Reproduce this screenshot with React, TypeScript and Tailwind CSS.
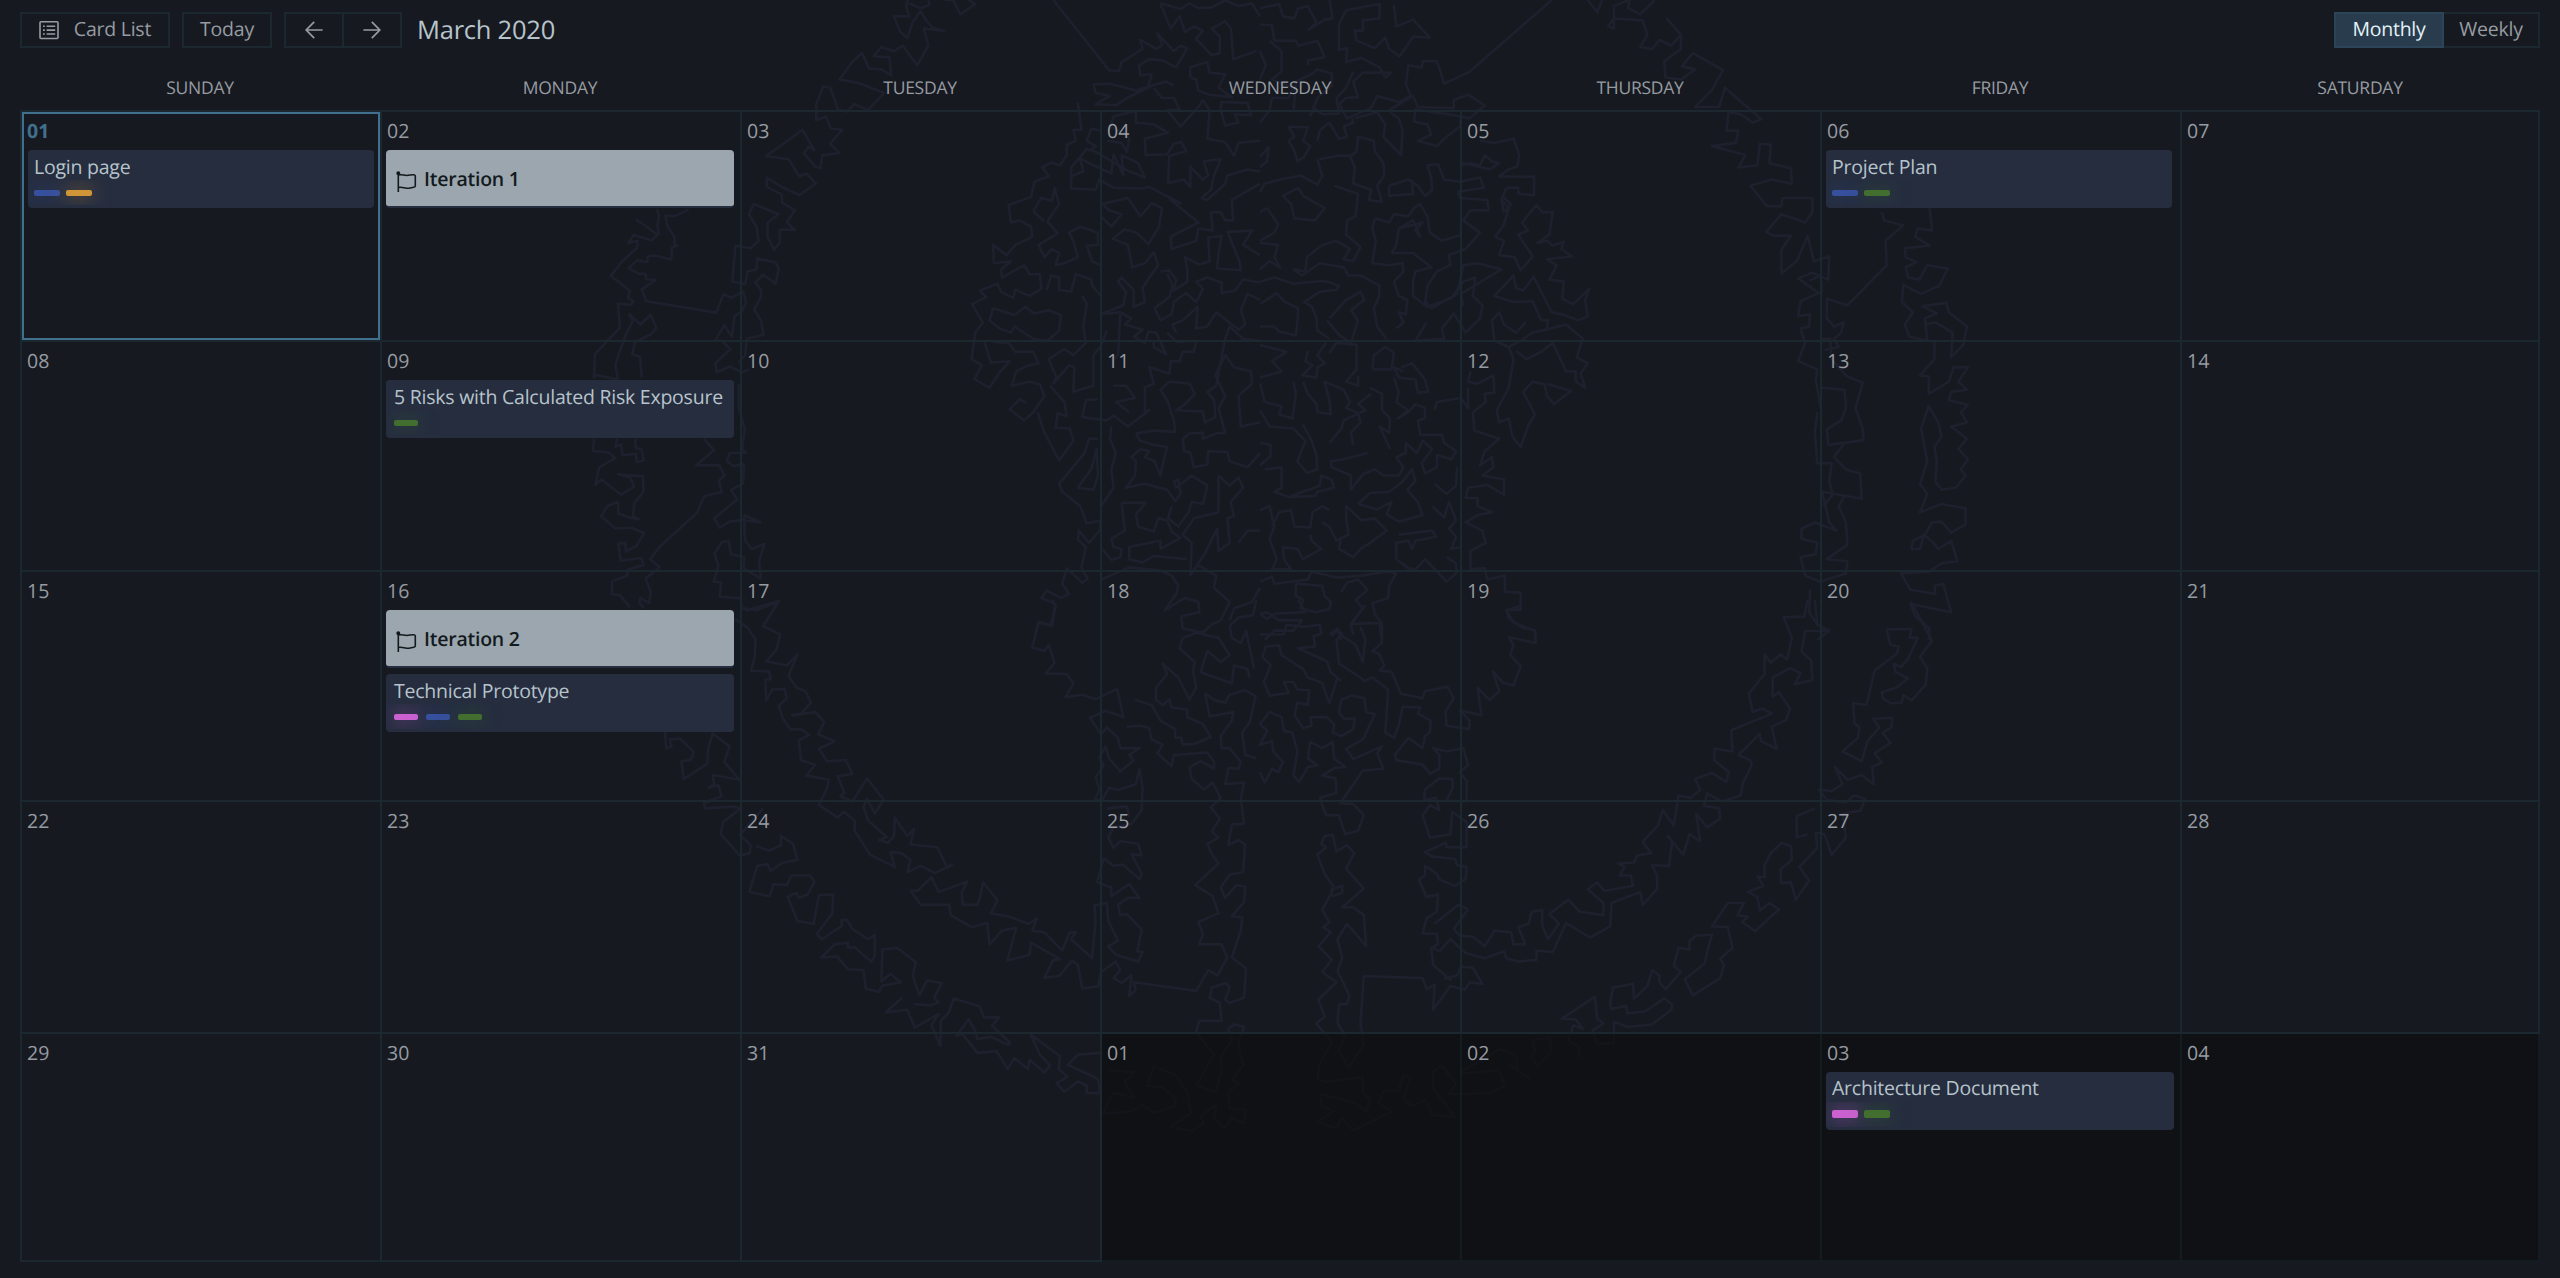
import React from "react";

type Label = "blue" | "orange" | "green" | "pink";
type Item =
  | { kind: "card"; title: string; labels: Label[]; bar: string; gap: string; frame?: string; line?: string }
  | { kind: "milestone"; title: string };
type Day = { n: string; today?: boolean; other?: boolean; items?: Item[] };

const labelClass: Record<Label, string> = {
  blue: "bg-[#36509d] shadow-[0_0_20px_#36509d90]",
  orange: "bg-[#d09536] shadow-[0_0_20px_#d09536b0]",
  green: "bg-[#426f2f] shadow-[0_0_20px_#426f2fa0]",
  pink: "bg-[#cb61d1] shadow-[0_0_20px_#cb61d1b0]",
};

const wide = "w-[26px] h-[6px]";
const narrow = "w-[24px] h-[6px]";

const weekdays = ["SUNDAY", "MONDAY", "TUESDAY", "WEDNESDAY", "THURSDAY", "FRIDAY", "SATURDAY"];

const special: Record<number, Partial<Day>> = {
  0: { today: true, items: [{ kind: "card", title: "Login page", labels: ["blue", "orange"], bar: wide, gap: "gap-[6px] pl-[6px]" }] },
  1: { items: [{ kind: "milestone", title: "Iteration 1" }] },
  5: { items: [{ kind: "card", title: "Project Plan", labels: ["blue", "green"], bar: wide, gap: "gap-[6px] pl-[6px]", frame: "mr-[2px]" }] },
  8: { items: [{ kind: "card", title: "5 Risks with Calculated Risk Exposure", labels: ["green"], bar: narrow, gap: "gap-[8px] pl-[8px]" }] },
  15: {
    items: [
      { kind: "milestone", title: "Iteration 2" },
      { kind: "card", title: "Technical Prototype", labels: ["pink", "blue", "green"], bar: narrow, gap: "gap-[8px] pl-[8px]" },
    ],
  },
  33: {
    items: [
      { kind: "card", title: "Architecture Document", labels: ["pink", "green"], bar: "w-[26px] h-[8px] -mt-[2px]", gap: "gap-[6px] pl-[6px]", line: "leading-[32px]" },
    ],
  },
};

const days: Day[] = Array.from({ length: 35 }, (_, i) => ({
  n: String(i < 31 ? i + 1 : i - 30).padStart(2, "0"),
  other: i >= 31,
  ...special[i],
}));

/* Faint line art of a tree inside a ring, split in four quadrants */
const topLeft = [
  "217,512 222,530 218,552 221,572 205,589 165,576 153,595 174,590 172,608 138,642 114,676 157,712 152,730 164,738 160,747 130,744 134,803 78,868 76,925 78,918 130,930 124,895 134,860 149,816 163,787 155,770 180,795 203,771 216,803 204,819 168,838 162,868 179,874 183,925",
  "170,538 194,555 218,575",
  "288,514 255,530 236,528 240,552 256,580 257,600 263,602 251,606 249,636 212,626 197,628 195,642 172,638 154,657 177,671 192,671 193,684 214,686 183,709 193,738 350,766 366,721 385,730 410,714 417,740 408,762 391,775 385,825 368,797 347,835 362,835 382,855 348,890 351,912 380,898 408,912 425,905",
  "76,1075 74,1105 108,1108 124,1122 88,1145 79,1188 93,1175 137,1212 166,1192 157,1170 130,1162 186,1167 187,1205 166,1233 164,1265 176,1272 152,1267 131,1258 130,1230 106,1240 92,1265 124,1295 160,1293 188,1306 172,1337 148,1351 146,1330 131,1332 136,1374 182,1367 187,1384 152,1395 150,1410 117,1424 116,1456 134,1458 157,1488",
  "128,1075 124,1095 137,1088 140,1115 170,1112 172,1132 187,1128 183,1102 170,1097 168,1075",
  "322,1075 345,1103 305,1140 357,1140 368,1165 356,1178 362,1206 323,1215 307,1256 224,1339 202,1370 223,1390 192,1417 203,1450 200,1478 180,1465 178,1478 188,1490",
  "400,940 400,1000 414,1050 408,1100 417,1110 380,1110 374,1130 388,1142 412,1137 410,1185 383,1200 397,1224 345,1270 358,1293 380,1278 411,1274 449,1280 413,1262 413,1295 415,1325 430,1345 458,1333 446,1374 450,1418 411,1392 413,1365 383,1358 378,1326 363,1328 346,1356 355,1386 344,1425 361,1427 358,1462 405,1466 407,1490 440,1495 490,1474 455,1535 495,1555",
  "780,0 775,15 782,40 748,40 762,78 778,93 790,55 807,27 820,50 835,68 860,76 815,70 825,112 800,160 768,112 748,125 719,115 703,138 738,140 742,185 720,170 692,168 677,130 657,148 626,195 668,203 726,228 690,270 660,255 642,273 622,268 614,240 605,215 590,212 574,255 574,295 595,285 607,315 632,318 605,352 626,375 588,380 583,412 572,408 546,375 557,360 570,368 543,318 497,355 462,382 512,390 536,432 552,425 573,450 536,478 500,460 463,435 463,458 497,477 498,497 526,515 508,545 526,563 492,563 492,595 480,612 465,580 465,545 490,525 434,500 423,525 440,555 445,590 427,608 393,602 386,690 415,695 420,665 440,660 442,633 482,643 490,658 483,695 455,673 437,692 450,710 450,728 435,758 450,785 456,820 418,830 415,870 400,888",
  "825,0 828,12 807,20 782,8",
  "862,0 880,0 897,35 930,10 915,0",
  "1105,0 1230,172 1252,174 1258,152 1305,120 1300,98 1336,120 1350,110 1338,82 1375,125 1390,112 1405,118 1380,165 1350,148 1320,145 1297,160 1300,185 1325,182 1318,212 1290,222 1232,205 1195,207 1200,228 1232,235 1200,255 1245,258 1270,240 1330,208 1358,200 1375,210",
  "1345,10 1368,70 1388,40 1400,78 1420,65 1440,75 1425,95 1460,135 1478,130 1478,90 1460,70 1490,52 1503,70 1508,145 1560,125",
  "1345,8 1390,22 1410,8 1430,20 1460,18 1490,0 1520,15 1550,8 1568,40",
  "1160,250 1168,318 1150,318 1155,345 1135,355 1135,380 1120,405 1100,398 1080,410 1095,432 1063,445 1055,483 1005,502 1010,545 1030,540 1055,555 1058,580 1020,600 1000,625 970,600 972,645 1010,640 988,660 990,680 1040,650 1052,672 1075,672 1078,708 1052,725 1020,710 1015,730 988,715 980,695 940,712 955,728 923,745 947,790 930,815 922,880 945,895 928,928 962,950 985,912 1008,885 965,888 950,835",
  "1060,518 1078,485 1102,492 1108,460 1118,500 1105,520 1092,543 1115,572 1072,600 1085,630 1102,610 1118,620 1110,650 1130,645 1160,630 1150,590 1140,570 1165,555 1205,570 1205,600 1180,602 1192,640 1215,652",
  "1060,518 1085,542",
  "970,755 1018,772 1042,752 1062,768 1095,760 1122,772 1118,810 1092,835 1060,830 1018,800 1010,815 985,805 962,785 970,755",
  "1090,710 1100,675 1118,680 1118,710 1145,715 1155,672 1190,685 1192,700 1212,725",
  "970,838 1005,840 1020,862 1060,862 1072,890 1045,897 1022,910 1012,945 1052,935 1075,942 1085,970 1060,1010 1040,1030 1007,1003 1030,978 1045,988",
  "1170,725 1180,745 1172,800 1178,840 1150,870 1130,855 1095,880 1112,925 1105,940 1140,895 1152,900 1150,960 1195,945 1195,870 1210,850 1225,810",
  "1070,1010 1085,1060 1118,1128 1150,1080 1142,1050 1110,1048 1115,1012 1135,1020 1130,985 1098,945",
  "1205,1075 1185,1075 1175,1110 1118,1185 1125,1205 1165,1240 1180,1282 1210,1275 1210,1298 1185,1330 1162,1300 1160,1322 1178,1340 1168,1390 1182,1418 1170,1428 1135,1392 1125,1430 1140,1455 1122,1465 1090,1447 1078,1465 1110,1480 1100,1532 1072,1523 1062,1568",
  "1160,1195 1190,1150 1202,1100 1205,1165 1195,1200 1160,1195",
  "1235,1045 1232,1075 1245,1110 1235,1150 1240,1195 1212,1240",
  "1145,432 1172,420 1165,388 1195,405 1235,425 1240,378 1262,430 1258,380 1295,400 1310,435 1272,418 1200,372 1180,365 1145,410 1145,462 1200,465 1208,440 1240,460 1305,462 1320,458 1390,498 1368,490 1430,545 1368,580 1370,610 1425,590 1430,560 1462,565 1458,520 1480,520 1490,540 1508,540 1505,490 1568,450",
  "1210,320 1190,315 1180,345 1200,358 1185,370",
  "1225,345 1258,350 1270,372 1275,340 1262,322 1232,312 1240,285 1290,272 1290,300 1330,305 1362,325 1310,340 1312,380 1360,378 1375,352 1392,348 1403,370 1365,382 1362,448 1398,440 1412,458 1412,408 1440,440 1452,430 1442,395 1480,390 1465,430 1458,465 1437,485 1450,490 1490,450 1495,430 1540,415 1568,420",
  "1330,215 1348,240 1375,240 1388,268 1360,270 1390,310 1430,262 1440,245 1455,270 1450,340 1490,348 1510,382 1520,350 1568,345",
  "1480,268 1490,308 1520,300 1512,280 1548,282 1540,252 1482,250 1480,268",
  "1412,190 1412,165 1450,152 1455,178 1490,182 1475,215 1505,238 1455,232 1430,222 1425,195 1412,190",
  "1215,500 1272,485 1300,530 1325,498 1348,510 1342,555 1318,598 1292,570 1265,562 1238,585 1272,600 1282,655 1310,645 1330,618 1340,650 1320,680 1305,705 1310,740 1285,752 1285,710 1258,680 1250,690 1268,715 1262,748 1215,768",
  "1215,500 1230,515 1258,525 1235,555 1212,530",
  "1345,665 1365,662 1380,685 1375,712 1405,690 1405,660 1400,630 1432,648 1455,640 1452,582 1482,578 1475,620 1472,658 1525,662 1522,640 1495,568 1550,565 1530,600 1568,625",
  "1360,670 1372,700 1365,728 1332,755 1345,785 1370,770 1375,740 1402,718 1425,740 1440,708 1425,690 1450,680 1482,692 1482,718 1512,712 1530,685 1568,692",
  "1212,770 1255,765 1280,780 1265,795 1305,808 1285,825 1310,840 1318,812 1335,815 1358,868 1330,850 1330,835",
  "1255,770 1250,870 1240,880",
  "1360,815 1382,838 1425,835 1420,862 1395,862 1388,885 1368,885 1365,915 1320,900 1330,940 1310,950 1310,1010 1320,1005 1272,1045 1240,1018 1225,1030 1170,1022 1178,980 1205,978",
  "1380,815 1372,795 1395,785 1428,752 1425,805 1450,800 1470,765 1520,808 1535,795 1525,760 1540,720 1568,735",
  "1240,945 1268,945 1288,975 1245,985 1275,1010",
  "1290,1062 1330,1055 1378,1058 1375,1030 1362,985 1345,955 1365,935 1410,940 1422,965 1400,990 1380,1005 1440,1008 1445,1035 1468,1022 1465,980 1450,960 1470,945 1490,830 1500,800 1530,830 1568,835",
  "1290,1062 1300,1080 1330,1090 1360,1095 1355,1115 1345,1165 1332,1130 1310,1120 1320,1105 1300,1100 1280,1120 1290,1130 1288,1165 1268,1195 1310,1185 1360,1200 1378,1228 1390,1210 1385,1175 1375,1180 1380,1195 1415,1165 1450,1190 1440,1235 1415,1230 1408,1255 1385,1290 1362,1270 1370,1240",
  "1395,1075 1410,1062 1440,1060 1440,1075 1470,1062 1490,1060 1475,1000 1490,970 1468,920 1490,870 1510,900 1548,910 1550,940 1520,970 1525,1045 1568,1035",
  "1395,1075 1398,1105 1412,1110 1420,1145 1450,1138 1452,1105 1495,1108 1500,1130 1540,1145 1568,1110",
  "1475,1165 1475,1255 1420,1270 1395,1310 1415,1330 1412,1410 1445,1355 1472,1295 1475,1350 1500,1330 1495,1270 1510,1265 1502,1230 1530,1195 1520,1170 1500,1190 1475,1165",
  "1258,1232 1312,1232 1290,1260 1295,1290 1330,1302 1340,1270 1360,1275 1372,1305 1390,1318 1345,1345 1345,1325 1275,1340 1275,1370 1305,1378 1330,1362 1405,1370",
  "1258,1232 1265,1300 1235,1320 1240,1340 1258,1345 1255,1365 1235,1372 1215,1345",
  "1212,1420 1275,1390 1345,1398 1370,1410 1385,1435 1380,1455 1355,1495 1400,1465 1430,1475 1432,1500 1392,1510 1395,1540 1440,1550 1460,1530 1480,1520 1500,1475 1465,1440 1470,1410 1430,1385",
  "1520,1330 1540,1300 1568,1300",
  "1500,1520 1510,1490 1550,1475 1568,1440",
];

const topRight = [
  "610,0 438,176 385,205 370,150 340,150 338,165 310,160 305,205 315,235 290,250 245,235 232,265 182,290 165,255 180,240 205,238 195,200 215,178 275,178 262,190 250,165 212,142 180,152 182,118 165,122 165,60 180,25 250,10 250,45 215,50 215,75 198,75 202,100 240,118 262,92 270,120 292,138 320,90 355,92 320,48 285,65 280,12",
  "0,20 40,10 48,40 72,45 80,20 100,15 118,55 100,75",
  "105,70 135,48 152,45 145,0",
  "0,60 25,62 30,100 75,100 80,112 120,100 135,140 100,148 100,160",
  "0,125 12,160 0,195",
  "20,100 45,125 45,175 25,195 70,215 60,240 25,240 20,270 0,300",
  "70,275 75,200 110,180 120,170 150,180 150,210 120,240 105,285",
  "110,262 130,280 165,278 160,240 180,215 195,175",
  "270,270 320,235 330,262 405,265 405,245 435,232 470,258 438,290 405,282 325,268 322,298 350,305 358,330 330,345 370,358 385,340 418,310 420,285",
  "198,290 245,275 262,305 258,335 295,380 298,320 290,290 272,275",
  "195,305 192,290",
  "145,300 165,340 182,335 175,310 195,300",
  "120,345 125,320 145,300",
  "60,310 100,312 90,345 105,358 92,385 78,395 72,370 60,345 72,335 60,310",
  "0,385 18,360 15,395 0,410",
  "125,390 160,382 188,382 198,410 195,450 232,465 228,490 255,495 245,455 260,430 258,400 240,370 238,345 205,335 202,370 190,382",
  "120,390 130,432 120,452 85,430 42,440 10,450 0,470",
  "80,460 90,480 135,510 115,540 72,535 65,500 48,480 80,460",
  "0,520 15,510 38,550 30,570 0,590",
  "155,455 205,475 200,530 182,540 180,575 210,605 195,640 175,635 188,610 160,590 130,600 98,630 95,665 70,660 88,675 125,645 175,655 185,675 210,675 250,700 248,730 238,755 245,800 265,832",
  "0,595 38,600 30,630 42,655 20,640 0,660",
  "0,690 30,680 70,695 135,688 165,700 160,710 125,715 92,740 108,750 118,780 120,810 145,830",
  "0,745 35,718 52,740 80,755 78,790 75,822 40,812 30,800 0,800",
  "145,780 180,735 210,715 218,735 190,760 205,785 190,840 165,820 140,785",
  "240,535 270,545 280,525 310,530 322,510 335,500 350,530 355,570 380,590 420,575 420,550",
  "240,535 235,560 242,590 235,645 270,650 298,645 300,665 280,690 290,725 308,735 305,770 290,765 300,790 285,805",
  "275,620 285,600 290,560 320,540 335,580 325,565 340,545 290,560",
  "275,620 320,620 358,655 325,665 320,690 320,725 350,752 400,730 425,690 450,680 445,725 465,748 460,780 430,815 405,768 380,805 385,830 325,835 348,790",
  "270,455 310,440 330,455 345,480 360,465 358,435 350,405 372,402 385,440 420,445 460,435 468,460 415,470 418,485 475,490 478,515 440,515 425,540 460,570 430,610 395,625 398,650 370,665 350,700 345,745",
  "270,455 270,480 320,475 318,440",
  "420,405 440,400 460,405 470,380 485,395 500,400 480,415 420,398",
  "460,345 490,350 530,340 542,380 538,408 520,415 500,432 573,433 573,478 540,475 540,460 515,460 505,490 510,520 525,500 505,480",
  "505,490 520,510 510,550 492,580 510,590 500,625 532,630 545,662 570,628 540,575 560,565 548,545 578,502 590,520 612,520 605,575 580,595 600,590 612,602 635,592 630,610 652,628 600,635 620,650 605,685 635,690 632,732 655,745 688,708 680,735 685,775 665,785 632,770 610,765 572,678 550,712 535,705 530,675 490,725 530,740 570,738 588,785 602,785 600,810",
  "425,750 420,720 505,660 455,645 425,650 412,720 360,755 345,740",
  "555,790 535,815 510,795 500,765 485,785 490,835 520,850 545,835 570,815 640,795 675,830 662,875 685,890 670,915 680,950 660,935 660,910 640,910 612,840 590,860 558,880 535,860",
  "440,910 435,935 455,940 488,920 490,962 470,965 472,985 445,1010 448,1055 500,1075 470,1105 460,1140 485,1120 488,1145 465,1165 510,1175 510,1212 475,1188 435,1195 430,1220 455,1220 455,1240 485,1255 455,1262 430,1280 465,1300 472,1330 440,1350 440,1395 470,1392 475,1420 512,1410 512,1450 545,1452 545,1485 515,1495 530,1525 575,1545 575,1568",
  "520,850 530,880 520,950 495,1005 500,1035 520,1025 528,1070 545,1095 562,1040 575,1015 550,960 570,935 595,942 600,970 615,990 650,958 600,940",
  "365,1005 370,985 420,975 435,1000 435,950",
  "0,845 55,862 25,885 45,910 0,925",
  "100,860 95,885 110,895 88,920 118,925 120,900 135,890 120,870 138,840",
  "145,865 160,840 202,845 202,905 180,935 205,945 205,920",
  "235,905 238,870 262,850 280,865 275,905 235,905",
  "70,935 75,965 68,1025 40,1015 45,995 10,985 0,940",
  "90,935 100,965 118,990 120,1010 148,1015 145,980 135,935 175,955 188,985 180,1000 205,1012 210,1035 190,1060 195,1090",
  "295,900 318,890 345,930 352,960 330,962 325,930 290,925 280,900 300,910",
  "280,925 290,960 285,985 310,1005 288,1025 310,1010 325,990 345,1000 345,1025 330,1030 335,1065 380,1065 385,1085 410,1105 400,1125 370,1115 370,1145 345,1160 338,1135 360,1100 340,1080 328,1110 305,1085 305,1110 285,1120 300,1145 290,1165 258,1165 240,1150 215,1162 190,1200 190,1165 150,1145 148,1130 175,1125 225,1110",
  "230,950 255,965 255,1005 272,1025 270,1060 250,1045 272,1100",
  "145,1085 170,1050 175,1030 220,1005 205,990 232,965",
  "90,1040 108,1080 118,1115 120,1150 98,1158 78,1130 95,1080 70,1050 20,1045 0,1005",
  "0,1085 22,1090 22,1118 0,1140",
  "10,1150 45,1145 45,1195 30,1205 60,1218 115,1215 120,1205 155,1195 150,1175 128,1165 125,1190 65,1215",
  "205,1235 230,1208 270,1205 298,1180 318,1150 325,1178 308,1200 330,1230 340,1262 290,1278 265,1260 275,1230 245,1248 205,1235",
  "0,1250 20,1240 30,1290 20,1320 35,1370 25,1395 65,1395 50,1370 48,1340 78,1345 90,1370 128,1345 108,1325 105,1310",
  "25,1290 40,1255 65,1250 72,1290 105,1292 110,1255 130,1240 145,1250",
  "130,1280 145,1290 160,1325 185,1310 180,1270 180,1240 212,1275 240,1270 265,1300 230,1330 210,1345 195,1365 165,1345 170,1315",
  "290,1310 360,1300 368,1315 325,1325 318,1345 310,1325 285,1330 285,1370 310,1392 325,1395 345,1370 390,1425 410,1405 410,1380 390,1365",
  "365,1185 390,1210 410,1190 412,1145",
  "360,1240 385,1268 395,1230 410,1275 395,1295 410,1315 400,1345 420,1340",
  "0,1425 25,1412 30,1430 100,1420 108,1400 160,1415 215,1410 265,1400 285,1405 270,1435 268,1465 235,1478 240,1505 255,1528 255,1568",
  "75,1430 75,1460 90,1470 85,1490 115,1500 145,1492 148,1475 135,1460 130,1435 75,1430",
  "170,1450 182,1428 205,1420 225,1445 200,1470 215,1490 190,1530 195,1555",
  "0,1505 15,1500 40,1520 88,1520 70,1545 30,1545 10,1568",
  "145,1555 162,1540 170,1568",
  "685,0 705,30 715,0",
  "825,0 795,35 770,20 772,0 740,15 740,70 728,65 740,45 800,50 810,85 795,115 820,120 835,98 860,112 880,85 880,120 845,150 848,190 880,195 910,170 882,162 905,130 968,172 945,220 910,262 960,262 972,215 1048,292 1030,300 1005,280 980,275 975,320 1000,320 995,350 945,358 1015,380 1000,410 1040,405 1045,352 1068,355 1065,400 1110,412 1112,450 1070,440 1025,455 1060,505 1090,505 1092,485 1155,485 1155,520 1140,545 1090,525 1058,568 1075,578 1110,578 1090,612 1090,670 1122,640 1145,578 1158,640 1190,628 1188,685 1155,668 1125,682 1168,718 1130,738 1125,775 1150,770 1148,800 1130,805 1140,840 1125,885 1165,905 1162,930 1172,1000",
  "850,45 880,85",
  "1148,688 1172,675 1175,715",
  "1300,520 1305,540 1345,552 1308,590 1310,650 1228,748 1185,732 1185,780 1200,800 1220,790 1215,815 1200,830 1210,850 1180,858",
  "1172,830 1192,830 1195,880 1225,920 1260,938 1245,1000 1260,1050 1262,1078 1222,1085 1200,1120 1225,1150 1255,1160 1258,1222 1175,1205 1190,1280 1205,1300 1160,1280 1132,1295 1132,1320 1165,1330 1162,1358 1130,1365 1140,1410 1170,1425 1225,1405 1228,1375 1185,1370 1228,1335 1225,1280 1210,1240 1222,1215",
  "1172,950 1222,955 1225,1000 1215,1030 1185,1052 1188,1090 1220,1085",
  "1165,1010 1160,1060 1165,1135 1195,1135 1190,1180 1198,1210 1178,1240",
  "1400,510 1405,565 1375,560 1370,580 1400,602 1348,608 1350,630 1372,642 1350,655 1355,680 1378,685 1395,650 1438,658 1420,700 1382,720 1345,698 1342,740 1365,765 1348,795 1358,825 1395,835 1390,780 1415,768 1385,750 1435,742 1440,765 1478,800 1470,845 1445,875 1448,815 1412,790 1390,795",
  "1410,835 1410,880 1380,920 1398,922 1398,965 1440,935 1450,900 1480,900 1460,935 1478,955 1445,960 1440,980 1480,992 1465,1010 1478,1035 1445,1045 1478,1075 1460,1100 1480,1125 1465,1150 1475,1165 1455,1195 1425,1200 1412,1180 1415,1130 1410,1095 1425,1070 1418,1035 1398,995 1382,1050 1395,1130 1380,1185 1395,1210 1380,1255 1425,1235 1475,1245 1475,1285 1445,1305 1425,1278 1405,1280 1390,1310 1365,1325 1362,1345 1380,1345 1388,1310 1408,1330 1418,1345 1445,1325 1458,1375 1425,1380 1400,1400 1340,1405 1360,1445 1412,1455 1410,1435 1428,1430 1445,1500 1360,1480 1370,1510 1400,1540 1398,1568",
  "1150,1445 1148,1500 1165,1530 1190,1545 1165,1568",
];

const bottomLeft = [
  "392,55 420,80 438,115 436,165 428,205 468,208 472,230 460,232 462,292 475,260 503,258 508,285 490,308 500,345 515,375 540,375 558,392 535,408 540,465 572,478 552,510 602,522 598,548 580,595 622,632 635,615 660,640 660,670 695,740 750,775 740,732 765,735 785,755 778,790 808,772 840,793 878,768 868,778 845,718 785,710 793,665 778,685 750,632 748,685 735,705 715,697 732,688 712,665 690,640 680,600 688,578 705,620 725,580 688,518 655,585 628,570 637,560 622,512 655,505 640,465 598,468 580,432 615,410 578,390 592,355 572,325 520,335 540,330 562,298 550,265 530,255 512,220 532,158 508,190 462,178 485,145 493,100 455,75 490,3 415,32",
  "235,383 238,430 250,425 245,405 268,402 300,442 292,465 272,468 277,520 330,475 332,430 342,388 380,425 368,470 402,522 342,508 345,535 333,545 355,538 362,570 322,590 325,605 385,600 405,605 365,645 360,680 403,742 425,735 427,712 403,682 455,605",
  "440,715 468,728 495,712 495,685 522,708 532,755 498,763 472,787 465,767 442,772 424,848 470,860 478,825 508,828 518,800 560,800 570,818 555,855 535,865 530,850 510,862 532,932 568,940 580,857 612,855 610,910 575,970 587,985 632,945 630,930 642,928 655,955 690,985 705,972 705,1035 697,1050 660,1008 645,1010 645,995 615,1000 585,1038 620,1035 645,1072 680,1075 685,1128 715,1138 722,1120 763,1110 740,1085 720,1108 722,1015 755,1010 797,1052 790,1090 805,1148 822,1105 855,1112 838,1155 848,1168 830,1177 792,1173",
  "766,1155 730,1197 778,1190 795,1242 848,1202 832,1235 852,1295 853,1222 870,1200 882,1157 940,1180 950,1212 983,1212 968,1237 1008,1285 1005,1292 965,1268 935,1275 930,1250 915,1218 888,1265 902,1260 935,1315 978,1310 1003,1362 1018,1330 1048,1362 1052,1335 1085,1372 1098,1352 1075,1320 1055,1262 1120,1325 1117,1362 1137,1385 1112,1403 1130,1428 1160,1398 1180,1410 1180,1432 1210,1432 1205,1390 1137,1350 1160,1320 1212,1315",
  "785,843 808,885 872,885 875,915 922,950 957,938 962,1000 990,960 1022,952 1002,1047 1052,1030 1055,995 1120,1043 1105,1045 1085,1097 1118,1092 1147,1047 1160,1060 1170,1128 1205,1122 1212,1080 1245,1050 1255,1075 1240,1097 1258,1112 1280,1090 1275,1150 1290,1132 1285,1110 1425,1135 1452,1075 1473,1090 1495,1038 1482,1000 1432,1000 1440,970 1430,935 1475,910 1462,860 1423,828 1475,765 1460,738 1450,708 1475,690 1460,672 1478,635 1458,602 1480,575 1462,530 1442,550 1415,520 1410,485 1435,468 1465,490",
  "785,843 800,845 832,805 848,848 912,818 900,850 902,885 935,885 940,865 948,820 980,872 965,910 1008,920 1050,940 1068,925 1058,960 1085,965 1125,1018 1142,965 1155,965 1145,985 1192,1040 1200,930 1197,887 1225,880 1228,930 1250,990 1228,1005 1245,1030 1295,1050 1305,1022 1293,1020 1303,957 1270,912 1255,915 1250,885 1272,865 1298,865 1275,825 1235,860 1235,835 1203,820 1218,750 1240,772 1260,768 1298,810 1303,795 1280,738 1303,742 1295,708 1255,700 1240,720 1228,690 1240,660 1280,650 1303,610 1305,545 1298,492 1290,535 1250,552 1230,545 1215,580 1198,580 1208,550 1200,515 1218,480 1208,458 1222,425 1230,460 1255,498 1285,465 1275,450 1298,430 1255,430 1250,400 1225,370 1212,390 1187,342 1222,322 1262,340 1248,258 1200,288 1170,275 1132,282 1150,242 1135,215 1088,213 1108,183 1095,130 1085,148 1058,138 1072,65 1102,75 1110,18 1103,0",
  "1270,368 1300,365 1320,372 1325,405 1350,420 1338,445 1370,482 1375,450 1450,443 1465,470 1465,490",
  "1288,290 1325,305 1345,350 1378,375 1378,400 1392,400 1395,420 1420,418 1458,398 1440,360 1405,340 1405,318 1370,312 1365,290 1350,305 1335,290 1335,255 1360,215 1350,185 1385,225 1410,290 1425,255 1418,205 1422,180 1388,140 1395,110 1425,95 1475,110 1500,160 1480,180 1450,148 1435,210 1505,242 1510,190 1540,200 1545,225",
  "1445,270 1455,338 1508,325 1505,350 1480,395 1482,430 1500,430 1525,470 1520,490 1498,487 1490,535 1532,530 1525,575 1532,650 1505,652 1497,712 1520,697 1535,710 1530,790 1500,798 1480,835 1490,865 1515,828 1535,832 1532,878 1505,918 1528,922 1525,960 1505,1038 1537,1070 1532,1155 1500,1170 1490,1160 1500,1125 1492,1112 1460,1125 1455,1155 1478,1170 1482,1222 1432,1222 1425,1255 1465,1320 1425,1410 1468,1428 1482,1370 1480,1325 1505,1280 1497,1245 1510,1232 1532,1240 1520,1290 1530,1350 1505,1395 1522,1400 1497,1430 1500,1475 1535,1480 1532,1520 1505,1505 1487,1535 1465,1500 1470,1465 1435,1500 1442,1520 1415,1542 1368,1530 1413,1490 1405,1430 1380,1380 1330,1355 1315,1410 1350,1415 1380,1450 1375,1470 1330,1490 1305,1465 1280,1485 1215,1492 1240,1430 1285,1445 1265,1400 1285,1372 1228,1365",
  "1445,270 1465,290 1490,298 1500,275 1535,262 1558,280 1545,355 1528,385 1535,450 1560,460",
  "1500,75 1520,50 1552,45 1560,0",
  "1500,75 1505,110 1525,125 1537,90 1555,200",
  "1225,605 1270,600 1275,630",
];

const bottomRight = [
  "545,0 545,28 515,30 520,52 548,80 575,88 577,125 520,108 530,130 523,160 545,192 530,248 508,240 487,208 500,265 480,290 455,255 463,335 418,320 438,350 437,375 390,365 388,325 405,285 392,252 345,265 340,285 295,272 275,208 250,205 260,190 250,158 235,148 255,125 250,68 220,68 190,70 220,15",
  "0,40 15,55 30,40 95,35 80,0",
  "0,100 50,100 55,72 90,78 125,72 128,98 112,105 115,135 80,140 140,178 148,210 170,235",
  "5,165 12,135 40,132 45,160 90,200 100,225 130,240 145,300 162,225",
  "5,165 22,190 8,238 20,278 60,270 50,238 70,238 78,260 103,262 100,305 78,298 72,335 90,372 108,365 105,340 140,340 155,362 152,385 170,395 195,375 198,345 175,345 165,325 170,290 192,277 218,285 222,325 240,332 215,405 180,432 195,462 255,425 245,445 258,490 215,495 168,590 195,592 217,625 205,670 178,680 165,625 138,625 125,575 160,560 158,518 130,510 155,488 178,485 155,460 152,412 130,430 105,412 100,460 120,480 100,485 82,528 70,510 78,440 68,385 50,380 45,340 20,325 0,360 15,380 0,420 25,410 28,440 48,470 38,500 25,490 10,530 0,500",
  "150,105 162,85 172,100 160,115 165,185 210,225 218,235 235,225 268,260 262,385 280,400 290,365 298,310 335,312 330,330 357,350 355,385 345,395 340,430 310,400 282,450 285,465 340,478 355,505 375,490 375,450 362,430 390,440 425,430 435,480 418,500 432,525 432,585 390,582 403,545 402,520 375,518 345,550 343,580 368,575 375,610 355,595 340,625 355,690 398,680 402,615 432,645 432,718 390,718 388,705 345,732 360,745 408,752 412,770 432,775 430,810 408,830 375,812 370,795 345,772 345,800 332,812 348,862 372,855 370,905 348,925 340,968 370,970 372,1000 358,1010 362,1060 400,1105",
  "172,105 200,130 215,180 220,115 210,78",
  "135,685 152,682 160,730 182,712 197,735 180,780 217,838 172,892 195,892 217,915 222,1005 182,940 162,985 172,1040 162,1078 172,1105 187,1150 182,1172 165,1175 162,1228 178,1265 165,1310 185,1358 217,1290 210,1230 217,1092 340,1098 348,1130 365,1118 362,1190 398,1120 428,1132 438,1110 465,1115 445,1068 420,1065 412,1090 385,1100",
  "135,685 128,708 138,718 120,740 135,795 155,835 130,900 145,935 132,950 148,965 122,1005 150,1045 130,1080 160,1110 122,1160 135,1210 118,1230 150,1285 125,1345 120,1390 140,1400 215,1385 215,1430 230,1450 222,1485 200,1460 125,1435 130,1470 155,1485 120,1515 160,1535 170,1505 195,1540 275,1485 248,1460 258,1425 290,1425 300,1380 315,1385 300,1450 320,1470 345,1450 362,1497 408,1500 362,1420 362,1370 380,1352 410,1405 395,1435 480,1432 512,1412 500,1365 420,1375",
  "150,860 150,840 172,830 172,850 150,860",
  "375,1020 398,985 430,1025 470,1040 510,1020 515,1040 540,1050 578,1045 578,1018 612,1022 640,938 690,980 732,948 735,880 795,848 800,885 830,840 830,800 820,770 855,772 862,700 852,685 885,740 898,680 920,700 912,622 935,660 962,635 960,605 928,598 935,562 965,585 1005,568 1010,530 1028,480 1025,465 1000,450 1045,388 1048,410 1080,432 1070,368 1100,348 1108,315 1085,268 1072,280 1072,225 1108,198 1130,212 1118,245 1155,232 1152,175 1132,150 1140,90 1185,90 1165,70 1160,0",
  "375,1020 362,1010",
  "420,975 445,978 470,1005 490,960 525,965 530,1000 555,1000 540,950 562,940 568,905 590,900 590,945 602,985 625,940 605,912 645,870 668,905 718,915 718,880 685,840 705,820 720,845 780,830 775,800 752,800 762,775 748,765 782,762 788,742 818,735 800,702 832,655 842,610 865,655 875,568 900,575 920,552 910,520 945,502 975,528 980,500 950,465 950,432 988,440 985,378 1070,330 1050,315 1030,325 1022,272 1055,215 1055,158 1068,182 1088,158 1102,172 1112,110 1095,50 1138,48 1145,0",
  "435,898 405,955 418,975",
  "365,940 415,885 435,898",
  "1310,85 1362,85 1358,110 1375,110 1355,170 1340,195 1325,185 1328,208 1355,228 1330,255 1300,268 1302,285 1318,300 1342,298 1345,275 1362,292 1392,245 1395,198 1380,165 1405,118 1370,28 1360,5",
  "1310,85 1318,130 1335,135 1332,155 1285,205 1268,305 1240,300 1243,358 1253,370 1250,400 1218,440 1258,468 1270,410 1295,370 1282,345 1322,342 1320,370 1302,385 1318,415 1285,445 1300,472 1280,485 1283,535 1258,508 1228,522 1202,485 1218,535 1195,555 1168,550 1185,580 1225,588 1242,568 1265,578 1255,612 1218,620 1225,690 1195,740 1180,680 1162,675 1165,720 1128,775 1148,815 1120,870 1110,820 1090,822 1088,782 1112,755 1110,715 1090,705 1068,735 1055,770 1055,805 1040,802 1052,830 1020,848 1040,862 1045,902 1065,880 1085,898 1035,962 1008,935 1020,920 998,915 1012,880 978,880 945,948 978,950 988,1010 962,1042 970,1060 962,1098 905,1148 888,1102 930,1055 935,1020 945,972 912,975 898,990 898,1015 875,1010 865,1062 880,1080 848,1130 835,1110 835,1090 820,1075 810,1120 782,1158 780,1115 738,1125 732,1170 735,1188 765,1178 768,1200 805,1195 845,1157 862,1175 860,1190 820,1232 770,1240 740,1225 740,1288 705,1288 695,1250 718,1230 705,1215 700,1152 632,1215 660,1218 675,1245 655,1235 645,1280 670,1298 665,1330",
  "1160,605 1122,628 1122,690 1145,680",
  "570,1280 605,1268 610,1310 580,1355 568,1325 575,1310 570,1280",
  "420,1370 470,1330 500,1305 535,1320 538,1360 520,1350 565,1390",
];

function Artwork() {
  const quads: [string, string[]][] = [
    ["translate(560 0) scale(0.44643 0.40816)", topLeft],
    ["translate(1260 0) scale(0.47832 0.40816)", topRight],
    ["translate(560 600) scale(0.44643 0.34439)", bottomLeft],
    ["translate(1260 600) scale(0.47832 0.34439)", bottomRight],
  ];
  return (
    <svg className="absolute left-0 top-0 h-[1278px] w-[2560px]" viewBox="0 0 2560 1278" fill="none" stroke="#1e212d" strokeWidth="2.6" strokeLinejoin="round">
      {quads.map(([transform, lines]) => (
        <g key={transform} transform={transform}>
          {lines.map((points, i) => (
            <polyline key={i} points={points} vectorEffect="non-scaling-stroke" />
          ))}
        </g>
      ))}
    </svg>
  );
}

function ListIcon() {
  return (
    <svg className="h-[20px] w-[20px]" viewBox="0 0 20 20" fill="none" stroke="currentColor" strokeWidth="1.6">
      <rect x="1" y="1.7" width="18" height="16.8" rx="1" />
      <path d="M7.6 6.2h8.6M7.6 10.1h8.6M7.6 14h8.6" />
      <path d="M4 6.2h1.8M4 10.1h1.8M4 14h1.8" />
    </svg>
  );
}

function Arrow({ flip }: { flip?: boolean }) {
  return (
    <svg className={flip ? "h-[18px] w-[18px] rotate-180" : "h-[18px] w-[18px]"} viewBox="0 0 18 18" fill="none" stroke="currentColor" strokeWidth="1.7">
      <path d="M9.2 0.8 1.2 9l8 8.2M1.2 9h16.4" />
    </svg>
  );
}

function Flag() {
  return (
    <svg className="mt-[5px] h-[22px] w-[22px] shrink-0" viewBox="0 0 22 22" fill="none" stroke="#131a1d" strokeWidth="1.6">
      <circle cx="2.3" cy="3.2" r="1.2" fill="#131a1d" />
      <path d="M2.3 3v19M2.3 5c3-1 5.500.5 8.300.5s4.500-1 7.200-.8c1 .1 1.500.6 1.500 1.400v9.700c0 .8-.5 1.300-1.500 1.400-2.600.3-4.400 1.300-7.200 1s-5.300-1.700-8.300-.7" />
    </svg>
  );
}

function Entry({ item }: { item: Item }) {
  if (item.kind === "milestone") {
    return (
      <div className="flex h-[58px] items-center rounded-[4px] border-b-2 border-[#252d3f] bg-[#9ba6ae] pl-[10px] text-[19.5px] font-semibold tracking-[-0.012em] text-[#131a1d]">
        <Flag />
        <span className="ml-[6px] mt-px">{item.title}</span>
      </div>
    );
  }
  return (
    <div className={`h-[58px] overflow-hidden rounded-[4px] bg-[#252d3f] text-[19.5px] tracking-[-0.012em] text-[#b7c4cb] ${item.frame ?? ""}`}>
      <div className={`h-[30px] whitespace-nowrap ${item.line ?? "leading-[34px]"} ${item.gap}`}>{item.title}</div>
      <div className={`flex h-[25px] overflow-hidden pt-[10px] ${item.gap}`}>
        {item.labels.map((l) => (
          <span key={l} className={`rounded-[2px] ${item.bar} ${labelClass[l]}`} />
        ))}
      </div>
    </div>
  );
}

function Cell({ day, first }: { day: Day; first: boolean }) {
  return (
    <div
      className={`relative min-w-0 border-b-2 border-r-2 pt-[38px] ${first ? "pl-[6px]" : "pl-[4px]"} pr-[6px] ${
        day.other ? "border-[#131c20] bg-[#0c0c0e]/60" : "border-[#1c2830]"
      }`}
    >
      {day.today && <div className="absolute inset-0 border-2 border-[#41708f]" />}
      <div
        className={`absolute left-[5px] top-[3px] text-[19.5px] leading-[32px] ${
          day.today ? "font-bold text-[#41708f]" : ""
        }`}
      >
        {day.n}
      </div>
      <div className="relative flex flex-col gap-[6px]">
        {day.items?.map((item) => (
          <Entry key={item.title} item={item} />
        ))}
      </div>
    </div>
  );
}

const box = "flex h-[36px] items-center justify-center border-2 border-[#1c2830]";

export default function App() {
  return (
    <div className="relative h-[1278px] w-[2560px] overflow-hidden bg-[#161920] font-['Open_Sans',sans-serif] font-[450] text-[#979ca2] [text-rendering:geometricPrecision]">
      <Artwork />
      <div className="relative px-[20px] pt-[12px]">
        <header className="flex h-[36px] items-center text-[19.5px] leading-[32px] tracking-[-0.012em]">
          <div className={`${box} w-[150px] gap-[15px]`}>
            <ListIcon />
            <span className="-mt-[2px]">Card List</span>
          </div>
          <div className={`${box} ml-[12px] w-[90px]`}>
            <span className="-mt-[2px]">Today</span>
          </div>
          <div className={`${box} ml-[12px] w-[60px]`}>
            <Arrow />
          </div>
          <div className={`${box} -ml-[2px] w-[60px]`}>
            <Arrow flip />
          </div>
          <h1 className="ml-[15px] text-[25.5px] font-[450] text-[#b7c4cb]">March 2020</h1>
          <div className="ml-auto flex h-[36px] w-[110px] items-center justify-center border-2 border-[#2c4458] bg-[#293c4d] text-[#e4f2f8]">
            <span className="-mt-[2px]">Monthly</span>
          </div>
          <div className={`${box} w-[96px] border-l-0`}>
            <span className="-mt-[2px]">Weekly</span>
          </div>
        </header>
        <div className="grid h-[62px] grid-cols-[repeat(7,360px)] text-center text-[17.5px] leading-[80px] tracking-[-0.015em]">
          {weekdays.map((d) => (
            <div key={d}>{d}</div>
          ))}
        </div>
        <div className="grid w-[2520px] grid-cols-[360px_repeat(5,360px)_358px] grid-rows-[230px_230px_230px_232px_228px] border-l-2 border-t-2 border-[#1c2830]">
          {days.map((day, i) => (
            <Cell key={i} day={day} first={i % 7 === 0} />
          ))}
        </div>
      </div>
    </div>
  );
}
